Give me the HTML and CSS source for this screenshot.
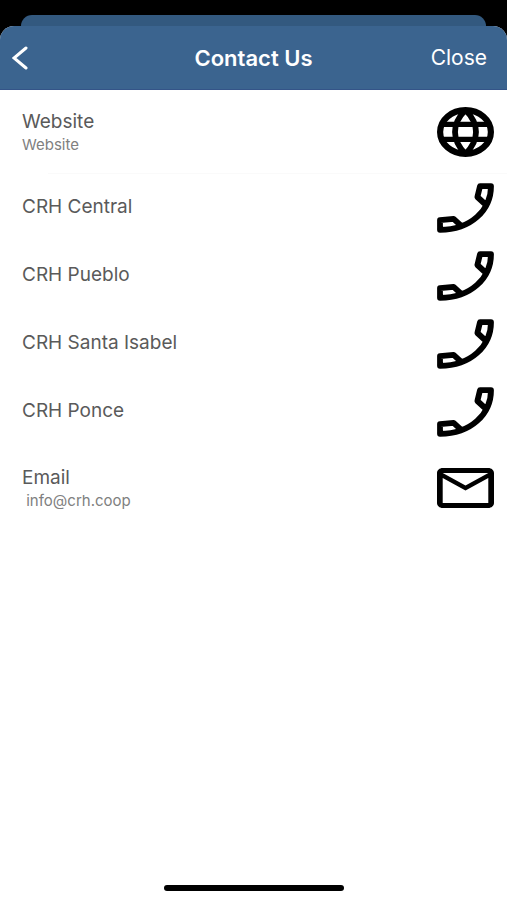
FILE: index.html
```html
<!DOCTYPE html>
<html lang="en">
<head>
  <meta charset="UTF-8">
  <meta name="viewport" content="width=device-width, initial-scale=1">
  <title>Contact Us</title>
  <link rel="stylesheet" href="styles.css">
</head>
<body>
  <svg class="defs" aria-hidden="true">
    <symbol id="icon-globe" viewBox="0 0 57 50">
      <g fill="none" stroke="#000" stroke-width="5.8">
        <ellipse cx="28.5" cy="25" rx="25.4" ry="21.8" stroke-width="6.2"/>
        <path d="M28.5 3C14.5 17 14.5 33 28.5 47M28.5 3c14 14 14 30 0 44"/>
        <path d="M5 17.4h47M5 32.4h47" stroke-width="5.4"/>
      </g>
    </symbol>
    <symbol id="icon-phone" viewBox="0 0 57 50">
      <path d="M24 42.6L16.6 35.8 3 37.2v9.6C34 46.8 54 27 54 3.2H43L40.4 14l7.6 7" fill="none" stroke="#000" stroke-width="5.8" stroke-linejoin="round"/>
    </symbol>
    <symbol id="icon-mail" viewBox="2 4 20 16" preserveAspectRatio="none">
      <path d="M22 6c0-1.1-.9-2-2-2H4c-1.1 0-2 .9-2 2v12c0 1.1.9 2 2 2h16c1.1 0 2-.9 2-2V6zm-2 0l-8 5-8-5h16zm0 12H4V8l8 5 8-5v10z"/>
    </symbol>
  </svg>

  <div class="sheet-behind"></div>
  <div class="sheet">
    <header class="navbar">
      <button class="back" type="button" aria-label="Back">
        <svg class="chevron" viewBox="0 0 16 24"><path d="M14 2L2 12l12 10"/></svg>
      </button>
      <h1>Contact Us</h1>
      <button class="close" type="button">Close</button>
    </header>

    <main class="contacts">
      <a class="contact detailed" href="#website">
        <span class="text"><span class="name">Website</span><span class="detail">Website</span></span>
        <svg class="icon"><use href="#icon-globe"/></svg>
      </a>
      <hr class="divider">
      <a class="contact" href="#central">
        <span class="text"><span class="name">CRH Central</span></span>
        <svg class="icon"><use href="#icon-phone"/></svg>
      </a>
      <a class="contact" href="#pueblo">
        <span class="text"><span class="name">CRH Pueblo</span></span>
        <svg class="icon"><use href="#icon-phone"/></svg>
      </a>
      <a class="contact" href="#santa-isabel">
        <span class="text"><span class="name">CRH Santa Isabel</span></span>
        <svg class="icon"><use href="#icon-phone"/></svg>
      </a>
      <a class="contact" href="#ponce">
        <span class="text"><span class="name">CRH Ponce</span></span>
        <svg class="icon"><use href="#icon-phone"/></svg>
      </a>
      <a class="contact detailed" href="mailto:info@crh.coop">
        <span class="text"><span class="name">Email</span><span class="detail">&nbsp;info@crh.coop</span></span>
        <svg class="icon mail"><use href="#icon-mail"/></svg>
      </a>
    </main>

    <div class="home-indicator"></div>
  </div>
</body>
</html>
```
FILE: styles.css
```css
* { box-sizing: border-box; }

body {
  display: flex;
  flex-direction: column;
  min-height: 100vh;
  margin: 0;
  padding-top: 15px;
  background: #000;
  font-family: Inter, "Liberation Sans", sans-serif;
}

.defs { position: absolute; width: 0; height: 0; }

.sheet-behind {
  height: 11px;
  margin: 0 21px;
  border-radius: 11px 11px 0 0;
  background: #33597f;
}

.sheet {
  flex: 1;
  display: flex;
  flex-direction: column;
  overflow: hidden;
  border-radius: 14px 14px 0 0;
  background: #fff;
}

.navbar {
  display: grid;
  grid-template-columns: 1fr auto 1fr;
  align-items: center;
  height: 64px;
  border-bottom: 1px solid #345488;
  background: #3b648f;
  color: #fff;
}
.navbar h1 { margin: 0; font-size: 22px; font-weight: 600; }
.navbar button { padding: 0 20px 0 12px; border: 0; background: none; color: inherit; font: inherit; }
.navbar .back { display: flex; justify-self: start; }
.navbar .close { justify-self: end; font-size: 21px; }
.chevron { width: 16px; height: 24px; fill: none; stroke: #fff; stroke-width: 3; stroke-linecap: round; }

.contacts { display: flex; flex-direction: column; }

.contact {
  display: flex;
  align-items: center;
  justify-content: space-between;
  height: 68px;
  padding: 0 13px 0 22px;
  color: #5a5a5a;
  text-decoration: none;
}
.contact.detailed { height: 84px; }
.text { display: flex; flex-direction: column; padding-bottom: 2px; }
.detailed .text { padding: 2px 0 0; }
.name { font-size: 19px; line-height: 24px; }
.detail { font-size: 15px; line-height: 22px; color: #808080; }

.divider {
  height: 1px;
  margin: -1px 0 0 48px;
  border: 0;
  background: #fafafa;
}

.icon { width: 57px; height: 50px; fill: #000; }
.icon.mail { height: 40px; }

.home-indicator {
  width: 180px;
  height: 6px;
  margin: auto auto 9px;
  border-radius: 3px;
  background: #000;
}
```
